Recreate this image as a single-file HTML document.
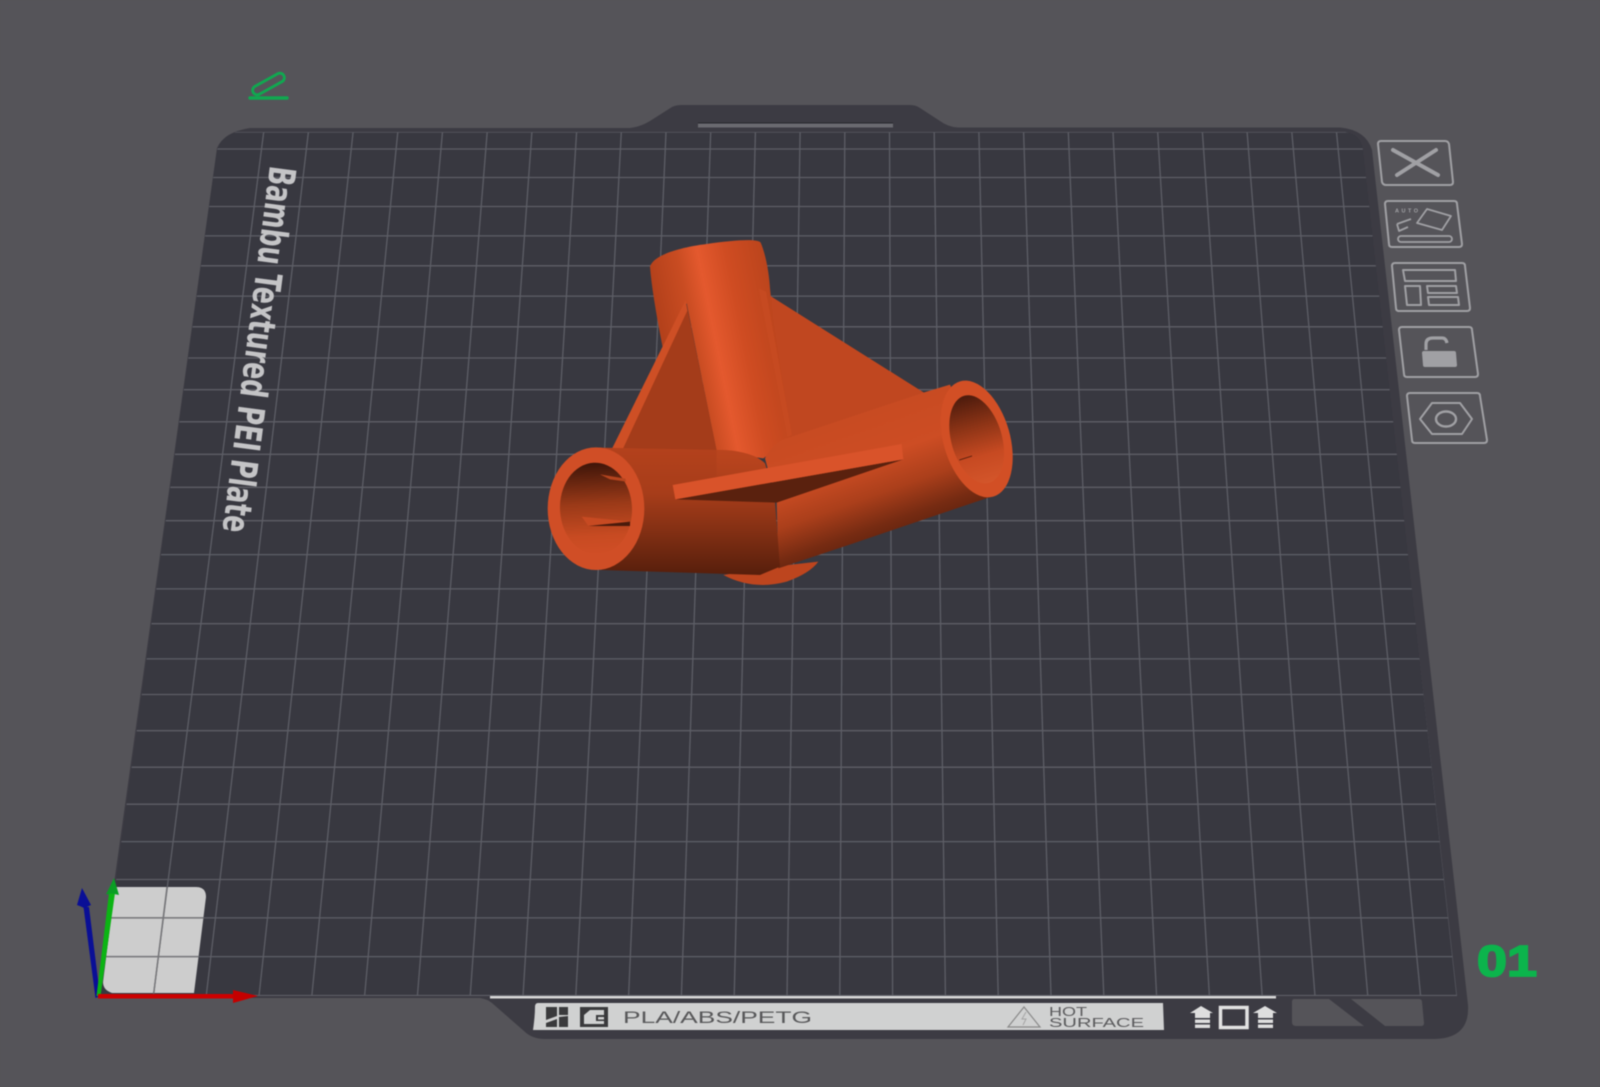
<!DOCTYPE html>
<html lang="en">
<head>
<meta charset="utf-8">
<title>Bambu Textured PEI Plate</title>
<style>
html,body{margin:0;padding:0;background:#555459;width:1600px;height:1087px;overflow:hidden}
svg{display:block;filter:blur(.5px)}
text{font-family:"Liberation Sans",sans-serif}
</style>
</head>
<body>
<svg xmlns="http://www.w3.org/2000/svg" width="1600" height="1087" viewBox="0 0 1600 1087">
<defs>
<clipPath id="gc"><path d="M236 132H1345Q1361 134 1363 150L1457 996H100L217 150Q222 136 236 132Z"/></clipPath>
<clipPath id="card"><path d="M115 887H196Q206 887 206 897L194 993H112Q103 990 103 982Z"/></clipPath>
<linearGradient id="cyl" gradientUnits="userSpaceOnUse" x1="420" y1="300" x2="773" y2="228">
<stop offset="0" stop-color="#b4411b"/><stop offset=".25" stop-color="#c94c22"/><stop offset=".42" stop-color="#e4592e"/><stop offset=".65" stop-color="#cf4c22"/><stop offset="1" stop-color="#b9441c"/>
</linearGradient>
<linearGradient id="rt" gradientUnits="userSpaceOnUse" x1="1000" y1="590" x2="1130" y2="960">
<stop offset="0" stop-color="#c84b22"/><stop offset=".35" stop-color="#cd4d24"/><stop offset=".62" stop-color="#ab3f1b"/><stop offset=".85" stop-color="#762b12"/><stop offset="1" stop-color="#5f220e"/>
</linearGradient>
<linearGradient id="lt" gradientUnits="userSpaceOnUse" x1="0" y1="690" x2="0" y2="1060">
<stop offset="0" stop-color="#b3411c"/><stop offset=".35" stop-color="#a73d1a"/><stop offset=".65" stop-color="#843014"/><stop offset="1" stop-color="#581f0c"/>
</linearGradient>
<linearGradient id="dome" gradientUnits="userSpaceOnUse" x1="0" y1="690" x2="0" y2="790">
<stop offset="0" stop-color="#ba451e"/><stop offset="1" stop-color="#ba451e" stop-opacity="0"/>
</linearGradient>
<linearGradient id="lh" gradientUnits="userSpaceOnUse" x1="0" y1="728" x2="0" y2="1003">
<stop offset="0" stop-color="#3e1509"/><stop offset=".45" stop-color="#9b3a18"/><stop offset=".8" stop-color="#c84b22"/><stop offset="1" stop-color="#d04e26"/>
</linearGradient>
<linearGradient id="rh" gradientUnits="userSpaceOnUse" x1="0" y1="527" x2="0" y2="790">
<stop offset="0" stop-color="#4f1c0d"/><stop offset=".35" stop-color="#8d3416"/><stop offset=".7" stop-color="#c74a22"/><stop offset="1" stop-color="#d3552a"/>
</linearGradient>
</defs>

<rect width="1600" height="1087" fill="#555459"/>

<!-- plate -->
<path d="M250 128H630Q640 127 650 121L672 107Q676 105 682 105H910Q916 105 920 108L940 121Q948 127 958 127.500H1340Q1366 130 1372 150L1468 1005Q1470 1038 1435 1039H545Q532 1039 524 1031L492 1003Q487 999 480 998H98L217 148Q224 132 250 128Z" fill="#3c3b43"/>
<path d="M236 132H1345Q1361 134 1363 150L1457 996H100L217 150Q222 136 236 132Z" fill="#383840"/>

<!-- slot on tab -->
<rect x="698" y="122.500" width="195" height="1" fill="#26262c"/>
<rect x="698" y="123.500" width="195" height="4" fill="#6a6a70"/>

<!-- pin card under grid -->
<path d="M115 887H196Q206 887 206 897L194 993H112Q103 990 103 982Z" fill="#cdcdcd"/>

<!-- grid -->
<g clip-path="url(#gc)" fill="none" stroke="#5d5e66" stroke-width="1.300">
<path d="M0 132H1600M0 149H1600M0 177.500H1600M0 206.500H1600M0 235.900H1600M0 265.800H1600M0 296.100H1600M0 326.800H1600M0 358H1600M0 389.700H1600M0 421.800H1600M0 454.300H1600M0 487.300H1600M0 520.700H1600M0 554.600H1600M0 588.900H1600M0 623.700H1600M0 658.900H1600M0 694.500H1600M0 730.700H1600M0 767.200H1600M0 804.200H1600M0 841.600H1600M0 879.500H1600M0 917.900H1600M0 956.600H1600M0 995.500H1600"/>
<path d="M263.700 132L153.400 996M308.400 132L206.200 996M353.100 132L259 996M397.800 132L311.800 996M442.500 132L364.600 996M487.200 132L417.400 996M531.900 132L470.200 996M576.600 132L523 996M621.300 132L575.800 996M666 132L628.600 996M710.700 132L681.400 996M755.400 132L734.200 996M800.100 132L787 996M844.800 132L839.800 996M889.500 132L892.600 996M934.200 132L945.400 996M978.900 132L998.200 996M1023.600 132L1051 996M1068.300 132L1103.800 996M1113 132L1156.600 996M1157.700 132L1209.400 996M1202.400 132L1262.200 996M1247.100 132L1315 996M1291.800 132L1367.800 996M1336.500 132L1420.600 996M1363 132L1457 996"/>
</g>
<g clip-path="url(#card)" fill="none" stroke="#77777a" stroke-width="1.400">
<path d="M0 917.900H300M0 956.600H300M167 887L153.400 996"/>
</g>

<!-- rotated plate name -->
<text transform="translate(270 165) rotate(97.400)" font-size="37" font-weight="bold" fill="#c4c4c6" style="font-family:'DejaVu Sans',sans-serif" textLength="369" lengthAdjust="spacingAndGlyphs">Bambu Textured PEI Plate</text>

<!-- pencil icon -->
<g fill="none" stroke="#10a850" stroke-linecap="round">
<path d="M250 98H287" stroke-width="3.400"/>
<rect x="251" y="79.500" width="35" height="9" rx="4.500" transform="rotate(-29 268.500 84)" stroke-width="2.800"/>
</g>

<!-- bottom strip -->
<rect x="490" y="996" width="786" height="2.500" fill="#d6d6d6"/>
<path d="M538 1003H1163L1164 1030H533Q535 1016 535 1007Q535 1003 538 1003Z" fill="#d0d1d1"/>
<g fill="#3a3a3c">
<path d="M546 1007H557V1016L546 1020ZM559 1007H568V1015H559ZM559 1017L568 1016V1027H559ZM546 1023L557 1019V1027H546Z"/>
<path d="M580 1007H608V1027H580Z"/>
</g>
<path d="M584 1024V1015L590 1010H604V1015H596V1021H604V1024Z" fill="#d0d1d1"/>
<rect x="598" y="1017" width="6" height="2.500" fill="#d0d1d1"/>
<text x="623" y="1023" font-size="16.500" fill="#58585a" textLength="189" lengthAdjust="spacingAndGlyphs">PLA/ABS/PETG</text>
<path d="M1008 1027L1024 1007L1040 1027Z" fill="none" stroke="#8a8a8a" stroke-width="1.200"/>
<path d="M1026 1012L1022 1019H1026L1023 1025" fill="none" stroke="#a5a5a5" stroke-width="1"/>
<text x="1049" y="1016" font-size="12.500" fill="#5c5c5e" textLength="38" lengthAdjust="spacingAndGlyphs">HOT</text>
<text x="1049" y="1027" font-size="12.500" fill="#5c5c5e" textLength="95" lengthAdjust="spacingAndGlyphs">SURFACE</text>

<g fill="#dedede">
<path d="M1190 1013L1201 1006L1213 1013H1210V1018H1195V1013Z"/>
<rect x="1195" y="1019.500" width="15" height="3.500"/>
<rect x="1195" y="1024.500" width="15" height="3.500"/>
<path d="M1253 1013L1265 1006L1277 1013H1273V1018H1258V1013Z"/>
<rect x="1258" y="1019.500" width="15" height="3.500"/>
<rect x="1258" y="1024.500" width="15" height="3.500"/>
</g>
<rect x="1220.500" y="1007.500" width="26.500" height="20" fill="none" stroke="#e2e2e2" stroke-width="3.500"/>

<path d="M1294 999H1329L1364 1026H1296Q1292 1026 1292 1022V1002Q1292 999 1294 999Z" fill="#555459"/>
<path d="M1351 999H1419Q1422 999 1422 1002L1424 1023Q1424 1026 1421 1026H1385Z" fill="#555459"/>

<!-- right side buttons -->
<g fill="none" stroke="#a0a0a4" stroke-width="2" stroke-linejoin="round">
<path d="M1381 141H1445Q1448 141 1449 144L1453 182Q1453 185 1450 185H1386Q1383 185 1382 182L1378 144Q1378 141 1381 141Z"/>
<path d="M1388 201H1454Q1457 201 1457 204L1462 244Q1462 247 1459 247H1392Q1389 247 1389 244L1385 204Q1385 201 1388 201Z"/>
<path d="M1395 263H1462Q1465 263 1465 266L1470 308Q1470 311 1467 311H1399Q1396 311 1396 308L1392 266Q1392 263 1395 263Z"/>
<path d="M1402 327H1469Q1472 327 1472 330L1478 374Q1478 377 1475 377H1407Q1404 377 1404 374L1399 330Q1399 327 1402 327Z"/>
<path d="M1410 393H1477Q1480 393 1480 396L1487 440Q1487 443 1484 443H1415Q1412 443 1412 440L1407 396Q1407 393 1410 393Z"/>
<path d="M1393 150L1438 175M1436 150L1397 175" stroke-width="4" stroke-linecap="round"/>
<path d="M1427 209L1451 216L1442 230L1417 223Z" stroke-width="1.800"/>
<path d="M1397 224L1411 219M1397 224L1399 231L1408 227" stroke-width="1.800"/>
<rect x="1398" y="236" width="54" height="6" rx="3" stroke-width="1.800"/>
<path d="M1403 270H1455L1456 281H1405Z"/>
<path d="M1405 286H1420L1421 305H1407Z"/>
<path d="M1427 286H1456L1457 293H1428Z"/>
<path d="M1428 297H1458L1459 305H1429Z"/>
<path d="M1426 350V344Q1426 338 1433 338H1442Q1446 338 1447 343" stroke-width="3.200"/>
<path d="M1420 419L1432 403H1460L1472 419L1462 434H1432Z"/>
<ellipse cx="1446" cy="419" rx="10" ry="7.500" stroke-width="2.400"/>
</g>
<path d="M1424 351H1454Q1456 351 1456 353L1457 365Q1457 367 1455 367H1425Q1423 367 1423 365L1422 353Q1422 351 1424 351Z" fill="#a0a0a4"/>
<text x="1395" y="212.500" font-size="5.500" font-weight="bold" fill="#a0a0a4" textLength="23">AUTO</text>

<!-- 01 -->
<text x="1477" y="976" font-size="44" font-weight="bold" fill="#0cb44c" stroke="#0cb44c" stroke-width="1.800" textLength="60" lengthAdjust="spacingAndGlyphs">01</text>

<!-- axes -->
<path d="M95.500 998L83.500 907H89L100 996Z" fill="#0a0f96"/>
<path d="M82 888L91 905Q87 907 84 908Q80 906 77 905Z" fill="#0a0f96"/>
<path d="M96.500 996L109 893H115L100.500 996Z" fill="#0cb414"/>
<path d="M114 878L119 895L112 893.500L106 894.500Z" fill="#0a9e24"/>
<rect x="98" y="994" width="136" height="4.500" fill="#cc0000"/>
<path d="M233 990L258 996L233 1003Z" fill="#c40000"/>

<!-- 3D model, drawn in 3x local coords -->
<g transform="translate(520 220) scale(.33333)">
<!-- bottom bump -->
<path d="M610 1065Q700 1112 800 1085Q870 1060 895 1025L760 1040Z" fill="#bd451e"/>
<!-- right gusset -->
<path d="M715 205L1212 518L815 655Z" fill="#c04720"/>
<!-- top cylinder -->
<path d="M390 140C400 105 480 82 560 72C640 60 715 55 722 68C740 110 748 170 750 205L760 300L815 650L730 715L590 695L500 250L428 382Q396 220 390 140Z" fill="url(#cyl)"/>
<path d="M716 205L738 215L816 645L802 652Z" fill="#c64a21"/>
<!-- left gusset -->
<path d="M500 255L590 692L305 690Z" fill="#a43c1a"/>
<path d="M497 240L277 684L308 688L502 272Z" fill="#ce4f25"/>
<!-- right tube -->
<path d="M735 715Q750 680 790 658L1210 518L1290 494L1425 826L1000 970L775 1045L770 845Z" fill="url(#rt)"/>
<!-- right ring -->
<ellipse cx="1370" cy="657" rx="100" ry="180" transform="rotate(-16 1370 657)" fill="#d24f25"/>
<ellipse cx="1370" cy="658" rx="76" ry="136" transform="rotate(-16 1370 658)" fill="url(#rh)"/>
<path d="M1318 720L1356 708L1330 716Z" fill="#4a1a0b" stroke="#4a1a0b" stroke-width="2"/>
<!-- left tube -->
<path d="M235 683L610 690Q700 695 735 730L765 845L780 1040L720 1065L245 1050Z" fill="url(#lt)"/>
<path d="M590 690Q690 690 735 730L760 800H590Z" fill="url(#dome)"/>
<!-- left ring -->
<ellipse cx="228" cy="866" rx="145" ry="184" fill="#d04e26"/>
<ellipse cx="228" cy="866" rx="108" ry="138" transform="rotate(-3 228 866)" fill="url(#lh)"/>
<path d="M240 763L316 776L318 785L270 778Z" fill="#b5441e"/>
<path d="M185 890L332 905L205 918Z" fill="#c74a22"/>
<path d="M205 918L330 905V918Z" fill="#4a1a0b"/>
<!-- bottom gusset -->
<path d="M468 838L1150 718L770 848Z" fill="#5a210e"/>
<path d="M458 795L1145 672L1150 718L466 838Z" fill="#d9532a"/>
</g>
</svg>
</body>
</html>
